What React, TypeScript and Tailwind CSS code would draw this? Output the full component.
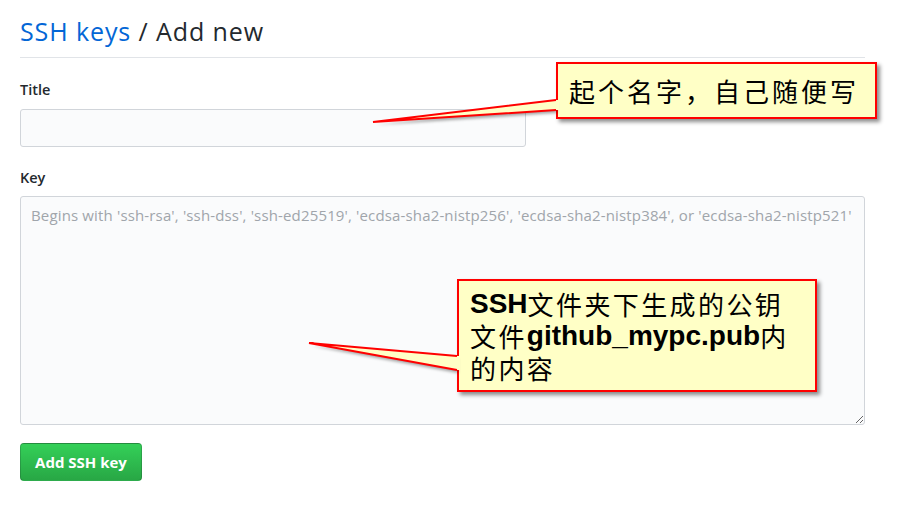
import React from "react";

const UI_FONT = "font-['Open_Sans','Liberation_Sans',sans-serif]";
const CJK = "font-['Noto_Sans_CJK_SC',sans-serif]";
const SEG = "inline-block h-8 leading-8 align-top";
const LATIN_BOLD = `${SEG} font-['Liberation_Sans','Noto_Sans_CJK_SC',sans-serif] font-bold tracking-normal text-[28px]`;

function Tails() {
  return (
    <svg
      className="absolute inset-0 pointer-events-none"
      width={909}
      height={518}
      viewBox="0 0 909 518"
    >
      <defs>
        <filter id="blur" x="-10%" y="-50%" width="120%" height="200%">
          <feGaussianBlur stdDeviation="1.5" />
        </filter>
      </defs>
      {/* shadows */}
      <polygon points="376,125 557,103 557,113" fill="rgba(0,0,0,0.35)" filter="url(#blur)" />
      <polygon points="312,346 458,359 458,373" fill="rgba(0,0,0,0.35)" filter="url(#blur)" />
      {/* tail 1 */}
      <polygon points="373,122 556,100 559,100 559,110 556,110" fill="#ffffc6" />
      <polyline points="556,100 373,122 556,110" fill="none" stroke="#ff0000" strokeWidth={2} strokeLinejoin="miter" />
      {/* tail 2 */}
      <polygon points="309,343 457,356 460,356 460,370 457,370" fill="#ffffc6" />
      <polyline points="457,356 309,343 457,370" fill="none" stroke="#ff0000" strokeWidth={2} strokeLinejoin="miter" />
    </svg>
  );
}

export default function App() {
  return (
    <div className={`relative w-[909px] h-[518px] bg-white text-[#24292e] ${UI_FONT}`}>
      <div className="ml-5 w-[845px]">
        <div className="pt-4 pb-[11px] border-b border-[#e1e4e8]">
          <h2 className="text-[25px] leading-[30px] font-normal tracking-[0.9px]">
            <span className="text-[#0366d6]">SSH keys</span> / Add new
          </h2>
        </div>

        <div className="mt-[22px] flex flex-col">
          <label className="block h-5 text-[14.5px] leading-5 font-semibold">Title</label>
          <input
            type="text"
            className="mt-[9px] w-[506px] h-[38px] bg-[#fafbfc] border border-[#d1d5da] rounded-[3px] px-2 text-[14px] outline-none"
          />

          <label className="mt-[21px] block h-5 text-[14.5px] leading-5 font-semibold">Key</label>
          <textarea
            className="mt-2 w-[845px] h-[229px] bg-[#fafbfc] border border-[#d1d5da] rounded-[3px] pt-2 px-[10px] text-[15px] tracking-[0.15px] leading-5 outline-none placeholder:text-[#a0a5ab]"
            placeholder="Begins with 'ssh-rsa', 'ssh-dss', 'ssh-ed25519', 'ecdsa-sha2-nistp256', 'ecdsa-sha2-nistp384', or 'ecdsa-sha2-nistp521'"
          />

          <div className="mt-[18px]">
            <button className="w-[122px] h-[38px] rounded-[4px] border border-[rgba(27,31,35,0.2)] bg-gradient-to-b from-[#34d058] to-[#28a745] text-white text-[15px] font-bold">
              Add SSH key
            </button>
          </div>
        </div>
      </div>

      {/* callout 1 */}
      <div className="absolute left-[556px] top-[62px] w-[321px] h-[57px] bg-[#ffffc6] border-2 border-[#ff0000] shadow-[3px_3px_4px_rgba(0,0,0,0.45)] flex items-center pl-[11px]">
        <span className={`${CJK} text-[26px] leading-none tracking-[3px] text-black`}>起个名字，自己随便写</span>
      </div>

      {/* callout 2 */}
      <div className="absolute left-[457px] top-[279px] w-[360px] h-[113px] bg-[#ffffc6] border-2 border-[#ff0000] shadow-[3px_3px_4px_rgba(0,0,0,0.45)] pl-[11px] pt-[7px]">
        <div className={`${CJK} text-[26px] tracking-[2.4px] text-black whitespace-nowrap`}>
          <div className="h-8 leading-8">
            <span className={LATIN_BOLD}>SSH</span>
            <span className={SEG}>文件夹下生成的公钥</span>
          </div>
          <div className="h-8 leading-8">
            <span className={SEG}>文件</span>
            <span className={LATIN_BOLD}>github_mypc.pub</span>
            <span className={SEG}>内</span>
          </div>
          <div className="h-8 leading-8">
            <span className={SEG}>的内容</span>
          </div>
        </div>
      </div>

      <Tails />
    </div>
  );
}
